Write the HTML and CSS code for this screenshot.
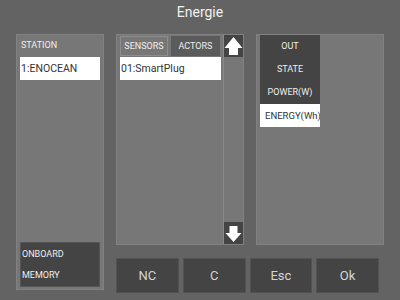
FILE: index.html
```html
<!DOCTYPE html>
<html>
<head>
<meta charset="utf-8">
<link rel="stylesheet" href="styles.css">
</head>
<body>
<div class="screen">
  <div class="title">Energie</div>
  <div class="main">
    <div class="panel left">
      <div class="label">STATION</div>
      <div class="item selected">1:ENOCEAN</div>
      <div class="spacer"></div>
      <div class="dark-box">
        <div class="dark-line">ONBOARD</div>
        <div class="dark-line">MEMORY</div>
      </div>
    </div>
    <div class="rightside">
      <div class="toprow">
        <div class="panel middle">
          <div class="listarea">
            <div class="tabs">
              <div class="tab active">SENSORS</div>
              <div class="tab">ACTORS</div>
            </div>
            <div class="item selected wide">01:SmartPlug</div>
          </div>
          <div class="scrollbar">
            <div class="sbtn">
              <svg width="19" height="22" viewBox="0 0 19 22"><path d="M9.5 2 L18.5 13 L14 13 L14 20 L5 20 L5 13 L0.5 13 Z" fill="#fff"/></svg>
            </div>
            <div class="track"></div>
            <div class="sbtn">
              <svg width="19" height="22" viewBox="0 0 19 22"><path d="M5.5 4 L13.5 4 L13.5 11 L17.5 11 L9.5 20 L1.5 11 L5.5 11 Z" fill="#fff"/></svg>
            </div>
          </div>
        </div>
        <div class="panel right">
          <div class="col">
            <div class="colitem">OUT</div>
            <div class="colitem">STATE</div>
            <div class="colitem">POWER(W)</div>
            <div class="colitem sel">ENERGY(Wh)</div>
          </div>
        </div>
      </div>
      <div class="buttons">
        <div class="btn">NC</div>
        <div class="btn">C</div>
        <div class="btn">Esc</div>
        <div class="btn">Ok</div>
      </div>
    </div>
  </div>
</div>
</body>
</html>
```

FILE: styles.css
```css
html, body {
  margin: 0;
  padding: 0;
}
body {
  font-family: Roboto, "Liberation Sans", sans-serif;
}
.screen {
  width: 400px;
  height: 300px;
  background: #636363;
  box-sizing: border-box;
  display: flex;
  flex-direction: column;
}
.title {
  height: 34px;
  line-height: 24px;
  text-align: center;
  color: #f0f0f0;
  font-size: 14px;
}
.main {
  display: flex;
  padding-left: 16px;
  gap: 12px;
}
.panel {
  background: #777777;
  border: 1px solid #818181;
  box-sizing: border-box;
}
.left {
  width: 88px;
  height: 256px;
  display: flex;
  flex-direction: column;
  padding: 0 3px 2px 3px;
}
.label {
  color: #eeeeee;
  font-size: 9px;
  height: 22px;
  line-height: 20px;
  padding-left: 1px;
}
.item {
  height: 23px;
  line-height: 23px;
  font-size: 10.5px;
  padding-left: 1px;
  white-space: nowrap;
}
.selected {
  background: #ffffff;
  color: #333333;
}
.spacer {
  flex: 1;
}
.dark-box {
  height: 45px;
  background: #444444;
  border: 1px solid #555555;
  box-sizing: border-box;
  color: #eeeeee;
  font-size: 9px;
  display: flex;
  flex-direction: column;
  justify-content: space-around;
  padding-left: 1px;
}
.rightside {
  width: 268px;
  display: flex;
  flex-direction: column;
  gap: 13px;
}
.toprow {
  display: flex;
  gap: 12px;
  height: 211px;
}
.middle {
  width: 128px;
  display: flex;
}
.listarea {
  width: 107px;
  padding: 1px 3px 0 3px;
  box-sizing: border-box;
  border-right: 1px solid #8a8a8a;
}
.tabs {
  display: flex;
  gap: 3px;
  height: 20px;
  margin-bottom: 1px;
}
.tab {
  box-sizing: border-box;
  border: 1px solid #5a5a5a;
  background: #5b5b5b;
  color: #eeeeee;
  font-size: 9px;
  line-height: 18px;
  text-align: center;
  padding: 0 2px;
  flex: 1;
}
.tab.active {
  background: #777777;
  border: 1px solid #8d8d8d;
  flex: 0 0 48px;
}
.wide {
  width: 100px;
}
.scrollbar {
  width: 19px;
  display: flex;
  flex-direction: column;
}
.sbtn {
  height: 22px;
  background: #444444;
  display: flex;
  align-items: center;
  justify-content: center;
}
.track {
  flex: 1;
}
.right {
  width: 128px;
  padding: 0 0 0 3px;
}
.col {
  width: 60px;
}
.colitem {
  height: 23px;
  line-height: 23px;
  background: #444444;
  color: #eeeeee;
  font-size: 9px;
  text-align: center;
  white-space: nowrap;
  overflow: hidden;
}
.colitem.sel {
  background: #ffffff;
  color: #333333;
  text-align: left;
  padding-left: 5px;
  font-size: 9.5px;
}
.buttons {
  display: flex;
  gap: 4px;
  width: 263px;
  height: 35px;
}
.btn {
  flex: 1;
  background: #444444;
  border: 1px solid #525252;
  box-sizing: border-box;
  color: #d4d4d4;
  font-size: 13px;
  display: flex;
  align-items: center;
  justify-content: center;
}
```
